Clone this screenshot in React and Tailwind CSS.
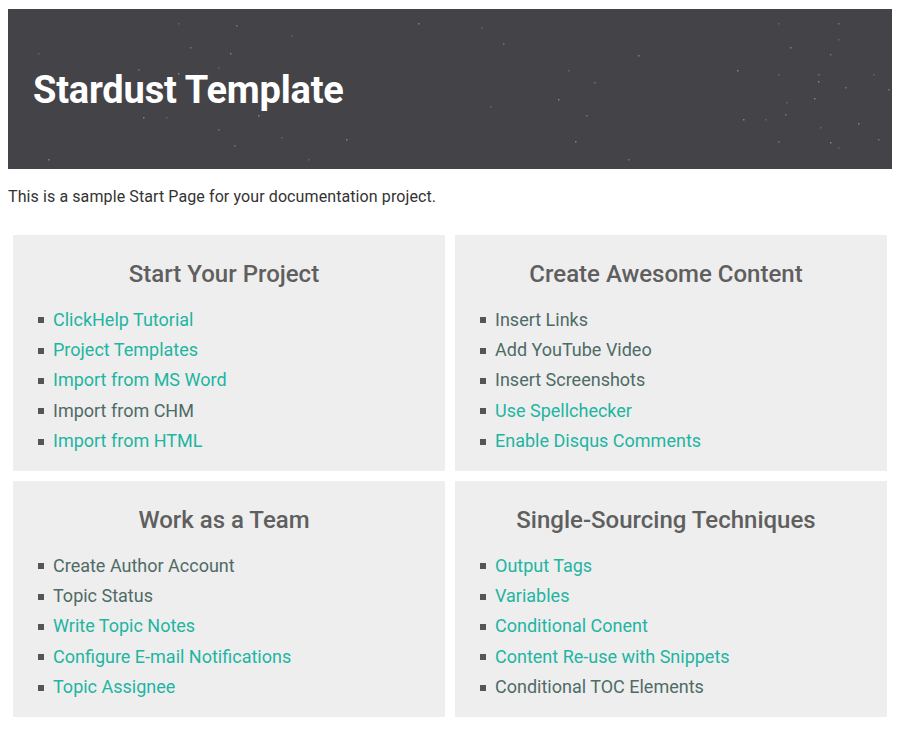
const stars = [
  [170, 14], [228, 16], [410, 14], [30, 44], [182, 38], [222, 44], [283, 26], [130, 60], [170, 64], [210, 58], [300, 78], [135, 108], [158, 108], [210, 120], [250, 106], [273, 128], [226, 136], [338, 130],
  [473, 18], [495, 34], [630, 46], [560, 61], [586, 73], [550, 90], [482, 97], [578, 106], [567, 132],
  [770, 14], [830, 14], [782, 38], [830, 30], [822, 45], [729, 61], [770, 65], [810, 65], [810, 72], [865, 65], [837, 78], [806, 89], [778, 93], [880, 80], [735, 110], [757, 110], [777, 105], [850, 114], [812, 118], [770, 132], [822, 133], [830, 138], [870, 130], [40, 150], [300, 150], [620, 150],
];

const sections = [
  {
    title: 'Start Your Project',
    items: [
      ['ClickHelp Tutorial', true],
      ['Project Templates', true],
      ['Import from MS Word', true],
      ['Import from CHM', false],
      ['Import from HTML', true],
    ],
  },
  {
    title: 'Create Awesome Content',
    items: [
      ['Insert Links', false],
      ['Add YouTube Video', false],
      ['Insert Screenshots', false],
      ['Use Spellchecker', true],
      ['Enable Disqus Comments', true],
    ],
  },
  {
    title: 'Work as a Team',
    items: [
      ['Create Author Account', false],
      ['Topic Status', false],
      ['Write Topic Notes', true],
      ['Configure E-mail Notifications', true],
      ['Topic Assignee', true],
    ],
  },
  {
    title: 'Single-Sourcing Techniques',
    items: [
      ['Output Tags', true],
      ['Variables', true],
      ['Conditional Conent', true],
      ['Content Re-use with Snippets', true],
      ['Conditional TOC Elements', false],
    ],
  },
];

function Card({ title, items }) {
  return (
    <div className="bg-[#eeeeee] pt-[23px] pb-[15px] pl-[25px] pr-[10px]">
      <h2 className="-ml-[25px] text-center text-[24px] leading-[32px] font-medium text-[#5f5f5f]">{title}</h2>
      <ul className="mt-[14px]">
        {items.map(([label, isLink]) => (
          <li key={label} className="flex items-center h-[30.4px] text-[18px]">
            <span className="w-[6px] h-[6px] bg-[#555555] mr-[9px] mt-[2px] shrink-0" />
            <span className={isLink ? 'text-[#1eb5a2]' : 'text-[#4f6b66]'}>{label}</span>
          </li>
        ))}
      </ul>
    </div>
  );
}

export default function App() {
  return (
    <div className="min-h-screen bg-white p-[8px] pt-[9px]" style={{ fontFamily: 'Roboto, "Noto Sans", sans-serif' }}>
      {/* Banner */}
      <div className="relative h-[160px] bg-[#444347] flex items-center pl-[25px] overflow-hidden">
        <svg className="absolute inset-0" width="884" height="160">
          {stars.map(([x, y], i) => (
            <rect key={i} x={x} y={y} width="1.5" height="1.5" fill="#8a898d" opacity={0.5 + (i % 3) * 0.2} />
          ))}
        </svg>
        <h1 className="relative text-[38px] font-bold text-white tracking-[-0.2px] mt-[2px]">Stardust Template</h1>
      </div>

      <p className="mt-[16px] text-[16px] leading-[24px] text-[#333333] tracking-[0.1px]">
        This is a sample Start Page for your documentation project.
      </p>

      <div className="grid grid-cols-2 gap-[10px] p-[5px] mt-[21px]">
        {sections.map((s) => (
          <Card key={s.title} title={s.title} items={s.items} />
        ))}
      </div>
    </div>
  );
}
